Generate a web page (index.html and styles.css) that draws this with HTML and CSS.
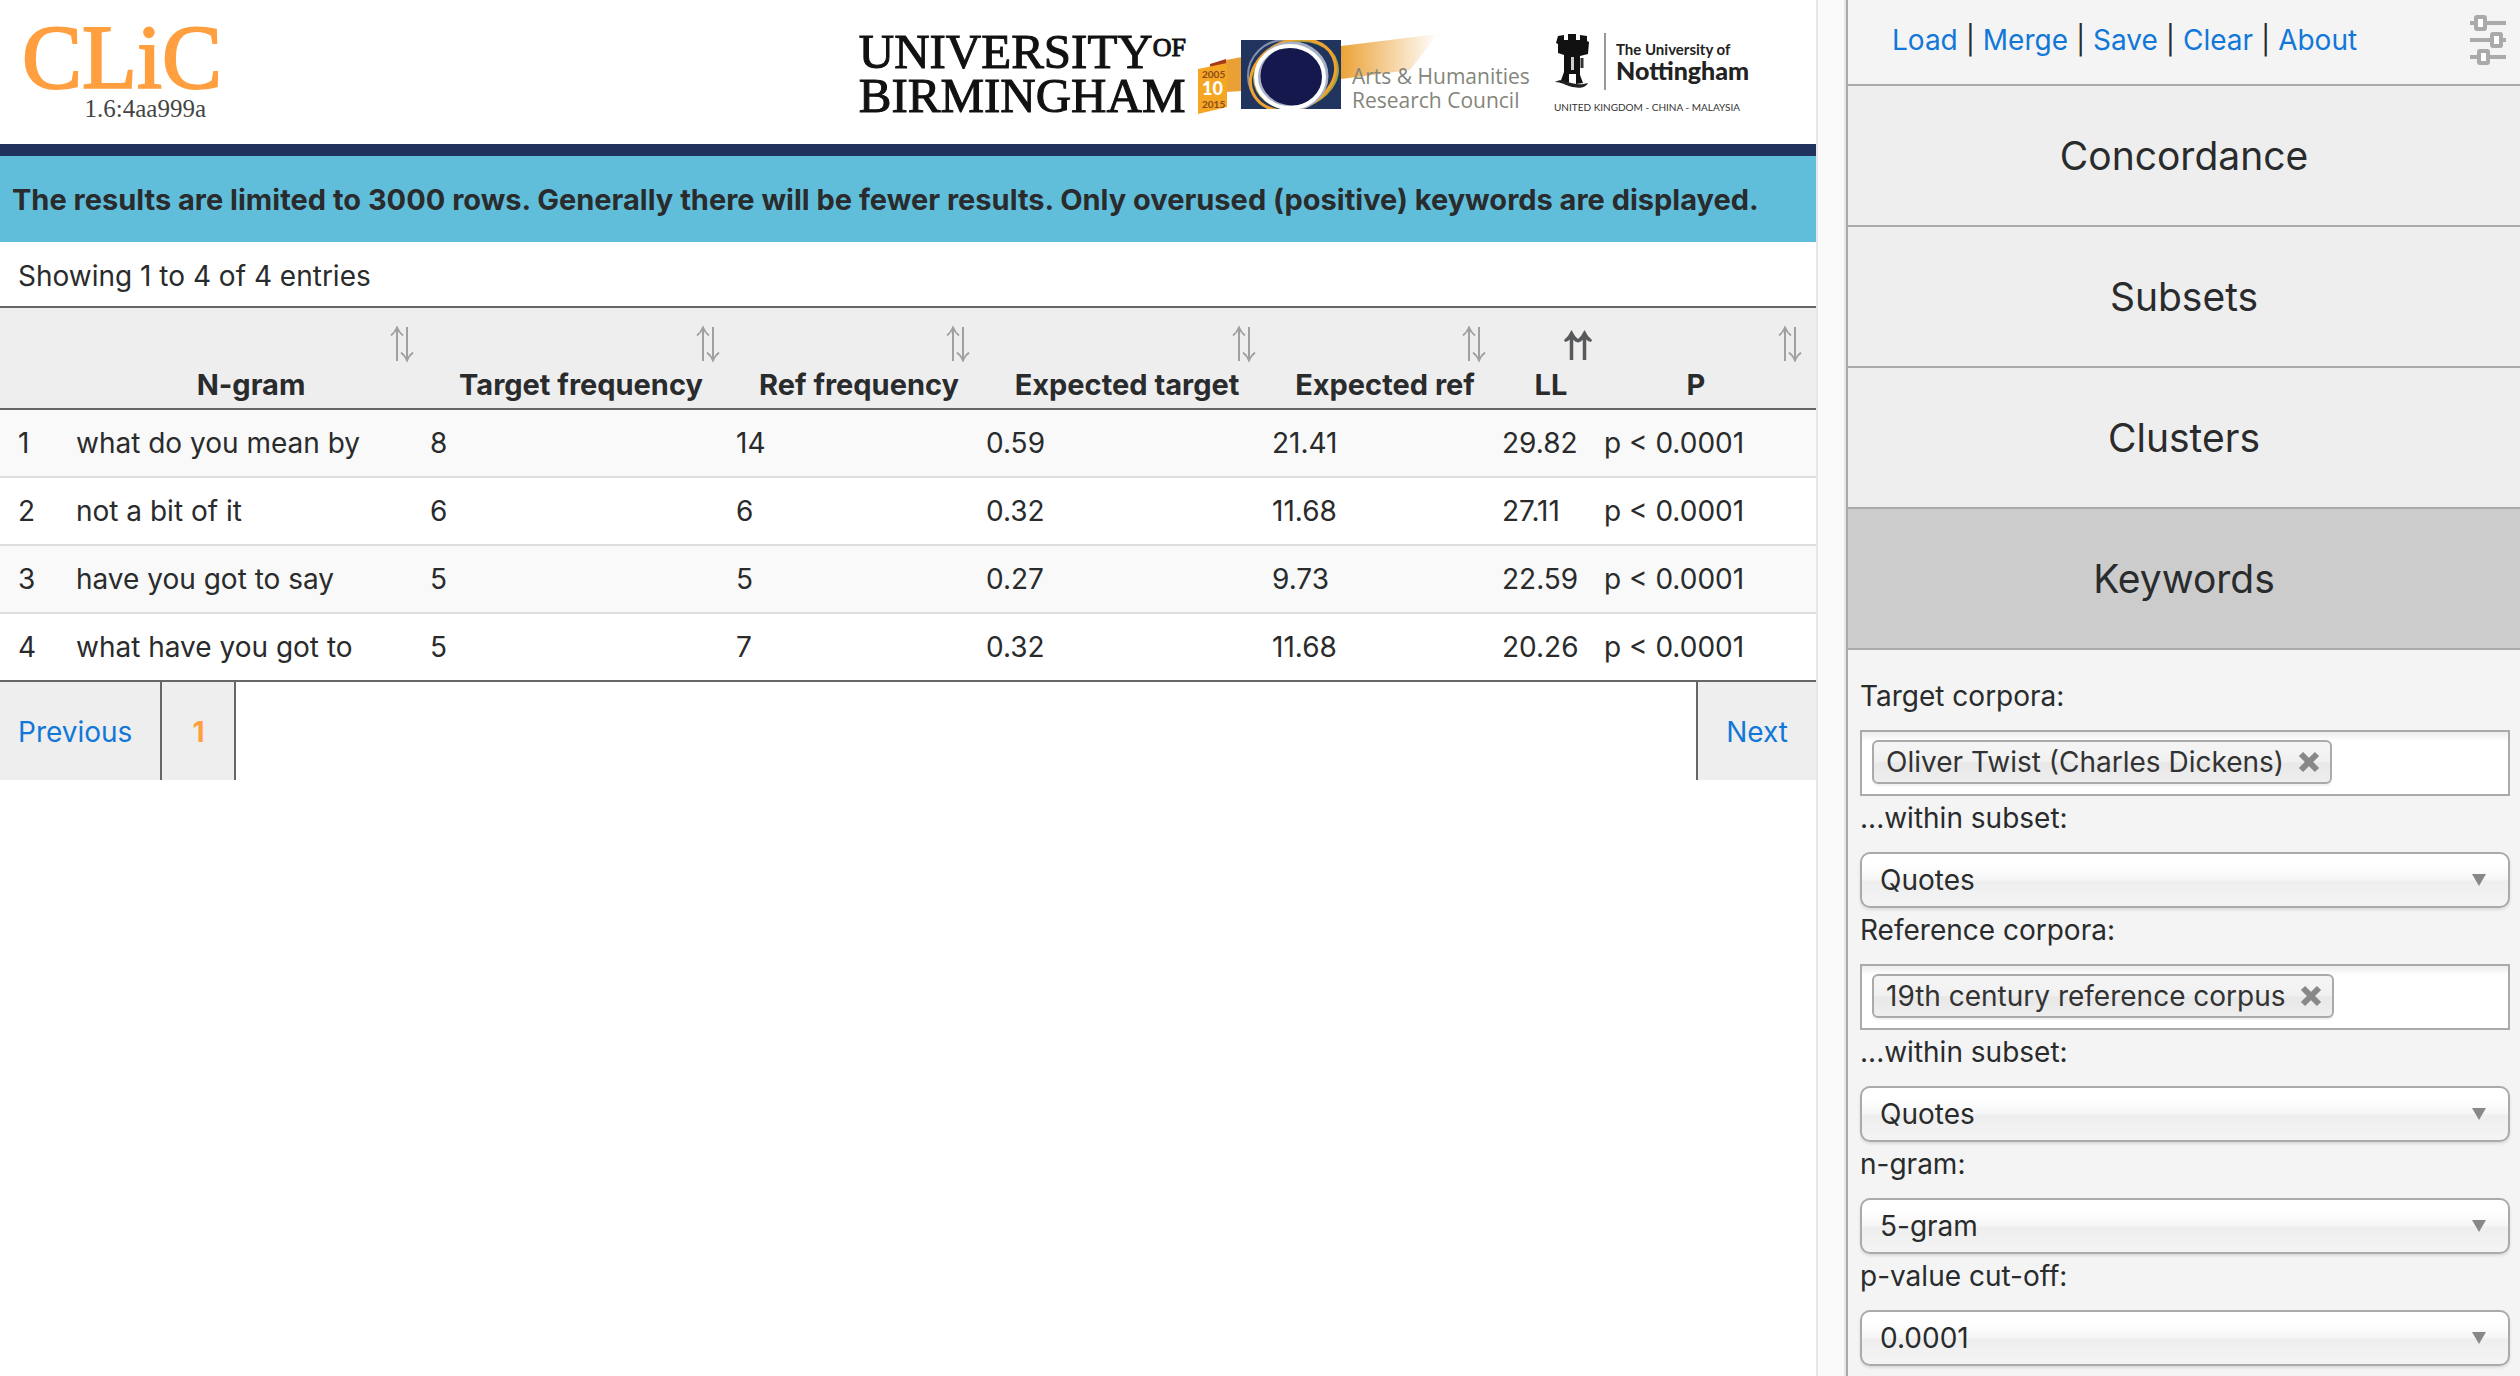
FILE: index.html
```html
<!DOCTYPE html>
<html lang="en">
<head>
<meta charset="utf-8">
<title>CLiC - Keywords</title>
<link rel="stylesheet" href="styles.css">
</head>
<body>
<svg class="defs" aria-hidden="true">
  <symbol id="sort" viewBox="0 0 24 36">
    <path d="M7 35V2M1 9.500Q5 6.500 7 1.500Q9 6.500 13 9.500M17 1V34M11 26.500Q15 29.500 17 34.500Q19 29.500 23 26.500" fill="none" stroke="#a0a0a0" stroke-width="2"/>
  </symbol>
  <symbol id="sorted" viewBox="0 0 28 36">
    <path d="M7.500 34V8M20.500 34V8" fill="none" stroke="#58595b" stroke-width="3.500"/>
    <path d="M7.500 4L11 10L14 13L17 10L20.500 4L24 10L28 14L27 16Q23 15 20.500 12Q17 16 14 16.500Q11 16 7.500 12Q5 15 1 16L0 14L4 10Z" fill="#58595b"/>
  </symbol>
</svg>
<div class="app">
  <main class="results">
    <header class="masthead">
      <a class="brand" href="#">
        <span class="brand-name">CLiC</span>
        <span class="brand-version">1.6:4aa999a</span>
      </a>
      <div class="partners">
        <a class="birmingham" href="#">
          <span>UNIVERSITY<sup>OF</sup></span>
          <span>BIRMINGHAM</span>
        </a>
        <a href="#" class="partner">
          <svg width="344" height="84" viewBox="0 0 344 84" role="img" aria-label="Arts and Humanities Research Council">
            <defs>
              <linearGradient id="beam"><stop offset="0" stop-color="#eba338"/><stop offset="1" stop-color="#eba338" stop-opacity="0"/></linearGradient>
              <clipPath id="tile"><path d="M43 10h100v69H43z"/></clipPath>
            </defs>
            <path d="M143 16L240 4L212 40L143 49Z" fill="url(#beam)"/>
            <path d="M28 30L44 27V61L28 62Z" fill="#e9a034"/>
            <path d="M12 34L28 29V34L12 38Z" fill="#a63b1c"/>
            <path d="M0 39L29 33V77L0 84Z" fill="#f5a623"/>
            <text x="4" y="48" class="badge-year">2005</text>
            <text x="4" y="65" class="badge-ten">10</text>
            <text x="4" y="78" class="badge-year">2015</text>
            <path d="M43 10h100v69H43z" fill="#21345d"/>
            <g clip-path="url(#tile)" fill="none">
              <ellipse cx="87" cy="46" rx="37" ry="36" stroke="#8291a9" stroke-width="2"/>
              <ellipse cx="98" cy="44" rx="42" ry="33" transform="rotate(-16 98 44)" stroke="#a2a33d" stroke-width="3"/>
              <ellipse cx="95" cy="45" rx="44" ry="34" transform="rotate(-24 95 45)" stroke="#f0a12e" stroke-width="3"/>
              <ellipse cx="94" cy="46" rx="34" ry="32" fill="#14184d" stroke="#a7b0c4" stroke-width="5"/>
              <ellipse cx="92" cy="47" rx="34" ry="31" stroke="#fff" stroke-width="4"/>
            </g>
            <text x="154" y="54" class="ahrc">Arts &amp; Humanities</text>
            <text x="154" y="78" class="ahrc">Research Council</text>
          </svg>
        </a>
        <a href="#" class="partner">
          <svg width="196" height="84" viewBox="0 0 196 84" role="img" aria-label="The University of Nottingham">
            <path d="M4 6L10 5V10H14V4H22V10H26V5L33 6V11L35 12L34 24L26 26L26 45L29 53L22 54V44H15V52L6 53L10 42V25L4 23V14L2 13Z" fill="#111"/>
            <path d="M17 27h3v13h-3z" fill="#ccc"/>
            <path d="M28 28v10" stroke="#333" stroke-width="3"/>
            <path d="M1 52C11 46 16 58 34 53C30 61 16 57 10 54Q5 52 1 52Z" fill="#222"/>
            <path d="M51 3V60" stroke="#999" stroke-width="2"/>
            <text x="62" y="25" class="nott-small">The University of</text>
            <text x="62" y="50" class="nott-large">Nottingham</text>
            <text x="0" y="81" class="nott-places">UNITED KINGDOM - CHINA - MALAYSIA</text>
          </svg>
        </a>
      </div>
    </header>
    <p class="notice">The results are limited to 3000 rows. Generally there will be fewer results. Only overused (positive) keywords are displayed.</p>
    <p class="summary">Showing 1 to 4 of 4 entries</p>
    <table class="data">
      <colgroup>
        <col class="c-index"><col class="c-ngram"><col class="c-target"><col class="c-ref"><col class="c-exptarget"><col class="c-expref"><col class="c-ll"><col>
      </colgroup>
      <thead>
        <tr>
          <td></td>
          <th><button><svg class="sort"><use href="#sort"/></svg><span>N-gram</span></button></th>
          <th><button><svg class="sort"><use href="#sort"/></svg><span>Target frequency</span></button></th>
          <th><button><svg class="sort"><use href="#sort"/></svg><span>Ref frequency</span></button></th>
          <th><button><svg class="sort"><use href="#sort"/></svg><span>Expected target</span></button></th>
          <th><button><svg class="sort"><use href="#sort"/></svg><span>Expected ref</span></button></th>
          <th aria-sort="descending"><button><svg class="sort sort-active"><use href="#sorted"/></svg><span>LL</span></button></th>
          <th><button><svg class="sort"><use href="#sort"/></svg><span>P</span></button></th>
        </tr>
      </thead>
      <tbody>
        <tr><td>1</td><td>what do you mean by</td><td>8</td><td>14</td><td>0.59</td><td>21.41</td><td>29.82</td><td>p &lt; 0.0001</td></tr>
        <tr><td>2</td><td>not a bit of it</td><td>6</td><td>6</td><td>0.32</td><td>11.68</td><td>27.11</td><td>p &lt; 0.0001</td></tr>
        <tr><td>3</td><td>have you got to say</td><td>5</td><td>5</td><td>0.27</td><td>9.73</td><td>22.59</td><td>p &lt; 0.0001</td></tr>
        <tr><td>4</td><td>what have you got to</td><td>5</td><td>7</td><td>0.32</td><td>11.68</td><td>20.26</td><td>p &lt; 0.0001</td></tr>
      </tbody>
    </table>
    <nav class="pager">
      <a href="#">Previous</a>
      <a href="#" class="current">1</a>
      <a href="#" class="next">Next</a>
    </nav>
  </main>
  <div class="gutter"></div>
  <aside class="sidebar">
    <div class="toolbar">
      <nav><a href="#">Load</a> | <a href="#">Merge</a> | <a href="#">Save</a> | <a href="#">Clear</a> | <a href="#">About</a></nav>
      <button class="toggle" aria-label="Toggle control bar">
        <svg width="36" height="50" viewBox="0 0 36 50">
          <path d="M0 8H36M0 25H36M0 42H36" stroke="#aaa" stroke-width="4"/>
          <g fill="#fff" stroke="#aaa" stroke-width="4">
            <rect x="6" y="2" width="9" height="12" rx="1"/>
            <rect x="22" y="19" width="9" height="12" rx="1"/>
            <rect x="9" y="36" width="9" height="12" rx="1"/>
          </g>
        </svg>
      </button>
    </div>
    <nav class="modes">
      <a href="#">Concordance</a>
      <a href="#">Subsets</a>
      <a href="#">Clusters</a>
      <a href="#" class="active">Keywords</a>
    </nav>
    <form class="controls">
      <label for="target">Target corpora:</label>
      <div class="chips">
        <span class="chip">Oliver Twist (Charles Dickens)
          <button type="button" aria-label="Remove Oliver Twist"><svg width="22" height="22" viewBox="0 0 22 22"><path d="M3 3L19 19M19 3L3 19" stroke="#888" stroke-width="6"/></svg></button>
        </span>
        <input id="target" type="text">
      </div>
      <label for="target-subset">...within subset:</label>
      <div class="select"><select id="target-subset"><option>Quotes</option></select></div>
      <label for="reference">Reference corpora:</label>
      <div class="chips">
        <span class="chip">19th century reference corpus
          <button type="button" aria-label="Remove 19th century reference corpus"><svg width="22" height="22" viewBox="0 0 22 22"><path d="M3 3L19 19M19 3L3 19" stroke="#888" stroke-width="6"/></svg></button>
        </span>
        <input id="reference" type="text">
      </div>
      <label for="reference-subset">...within subset:</label>
      <div class="select"><select id="reference-subset"><option>Quotes</option></select></div>
      <label for="ngram">n-gram:</label>
      <div class="select"><select id="ngram"><option>5-gram</option></select></div>
      <label for="pvalue">p-value cut-off:</label>
      <div class="select"><select id="pvalue"><option>0.0001</option></select></div>
    </form>
  </aside>
</div>
</body>
</html>
```
FILE: styles.css
```css
* { box-sizing: border-box; }

body {
  margin: 0;
  font-family: Inter, "Liberation Sans", sans-serif;
  font-size: 28px;
  line-height: 44px;
  color: #292b2c;
  background: #fff;
}

a { color: #1177d8; text-decoration: none; }

button, input, select {
  font: inherit;
  color: inherit;
  margin: 0;
  padding: 0;
  border: 0;
  background: none;
}

.defs { display: none; }

.app {
  display: grid;
  grid-template-columns: minmax(0, 1fr) 30px 674px;
  height: 100vh;
  overflow: hidden;
}

.gutter {
  background: #fafafa;
  border: solid #e7e7e7;
  border-width: 0 2px;
}

/* Header */
.masthead {
  display: flex;
  justify-content: space-between;
  height: 156px;
  border-bottom: 12px solid #20335c;
}

.brand {
  display: flex;
  flex-direction: column;
  padding: 16px 0 0 22px;
  font-family: "Liberation Serif", serif;
}

.brand-name {
  font-size: 90px;
  line-height: 84px;
  color: #ff9f40;
  -webkit-text-stroke: 2px #ff9f40;
}

.brand-version {
  align-self: flex-end;
  padding-right: 16px;
  font-size: 25px;
  line-height: 18px;
  color: #444;
}

.partners { display: flex; gap: 12px; padding: 30px 66px 0 0; }
.partner { display: block; height: 84px; }
.partner svg { display: block; }

.birmingham {
  display: flex;
  flex-direction: column;
  font-family: "Liberation Serif", serif;
  font-size: 49px;
  line-height: 44px;
  color: #111;
  -webkit-text-stroke: 1px #111;
}

.birmingham sup { font-size: 26px; line-height: 0; vertical-align: 12px; }

.badge-year { font: 700 10px Lato, sans-serif; fill: #8a4a1c; }
.badge-ten { font: 900 18px Lato, sans-serif; fill: #fff; }
.ahrc { font: 400 21px "Open Sans", sans-serif; fill: #84857a; }
.nott-small { font: 700 15px Lato, sans-serif; fill: #222; }
.nott-large { font: 900 25px Lato, sans-serif; fill: #222; }
.nott-places { font: 400 10px Lato, sans-serif; fill: #333; }

/* Results */
.notice {
  margin: 0;
  padding: 22px 12px 20px;
  font-size: 29px;
  font-weight: 700;
  background: #61bedb;
}

.summary { margin: 0; padding: 12px 18px 8px; }

.data {
  width: 100%;
  table-layout: fixed;
  border-spacing: 0;
  border: solid #666;
  border-width: 2px 0;
}

.c-index { width: 64px; }
.c-ngram { width: 354px; }
.c-target { width: 306px; }
.c-ref { width: 250px; }
.c-exptarget { width: 286px; }
.c-expref { width: 230px; }
.c-ll { width: 102px; }

.data thead td, .data th {
  padding: 0;
  background: #eee;
  border-bottom: 2px solid #666;
}

.data th button {
  display: flex;
  flex-direction: column;
  width: 100%;
  height: 100px;
  padding-top: 18px;
  font-size: 29px;
  font-weight: 700;
  cursor: pointer;
}

.data th span { align-self: stretch; padding-left: 20px; line-height: 46px; white-space: nowrap; }
.sort { align-self: flex-end; flex: none; width: 24px; height: 36px; margin-right: 4px; }
.sort-active { width: 28px; margin-right: 0; }
.data th:last-child .sort { margin-right: 14px; }
.data th:last-child span { padding-right: 36px; }

.data tbody td { height: 68px; padding: 0 12px; border-bottom: 2px solid #ddd; }
.data tbody td:first-child { padding-left: 18px; }
.data tbody tr:nth-child(odd) { background: #f9f9f9; }
.data tbody tr:last-child td { height: 66px; border-bottom: 0; }

.pager { display: flex; }
.pager a { padding: 28px 28px 26px 18px; background: #eee; border-right: 2px solid #666; }
.pager .current { padding-left: 30px; padding-right: 30px; font-weight: 700; color: #ff9f40; }
.pager .next { margin-left: auto; padding-left: 28px; border-left: 2px solid #666; border-right: 0; }

/* Sidebar */
.sidebar { background: #f4f4f4; border-left: 2px solid #aaa; }

.toolbar {
  display: flex;
  justify-content: space-between;
  align-items: center;
  height: 86px;
  padding: 0 14px 4px 44px;
  border-bottom: 2px solid #aaa;
}

.toggle { display: flex; cursor: pointer; }

.modes a {
  display: block;
  height: 141px;
  font-size: 39px;
  line-height: 140px;
  text-align: center;
  color: #292b2c;
  background: #eee;
  border-bottom: 2px solid #aaa;
}

.modes .active { background: #ccc; }

.controls { display: flex; flex-direction: column; padding: 24px 10px 0 12px; }
.controls label { margin-bottom: 12px; }

.chips {
  display: flex;
  align-items: flex-start;
  height: 66px;
  padding: 8px 10px;
  background: linear-gradient(#eee 1%, #fff 15%);
  border: 2px solid #aaa;
}

.chips input { flex: 1; min-width: 0; outline: 0; }

.chip {
  display: flex;
  align-items: center;
  gap: 14px;
  height: 44px;
  padding: 0 10px 0 12px;
  color: #333;
  white-space: nowrap;
  background: linear-gradient(#f4f4f4 20%, #f0f0f0 50%, #e8e8e8 52%, #eee);
  border: 2px solid #aaa;
  border-radius: 6px;
  box-shadow: 0 2px 0 rgba(0, 0, 0, 0.05);
}

.chip button { display: flex; cursor: pointer; }

.select { display: grid; align-items: center; }
.select select, .select::after { grid-area: 1 / 1; }

.select select {
  appearance: none;
  height: 56px;
  padding: 0 18px;
  background: linear-gradient(#fff 20%, #f6f6f6 50%, #eee 52%, #f4f4f4);
  border: 2px solid #aaa;
  border-radius: 10px;
  box-shadow: 0 2px 3px rgba(0, 0, 0, 0.1);
}

.select::after {
  content: "";
  justify-self: end;
  margin-right: 24px;
  border: solid transparent;
  border-width: 12px 7px 0;
  border-top-color: #888;
  pointer-events: none;
}
```
